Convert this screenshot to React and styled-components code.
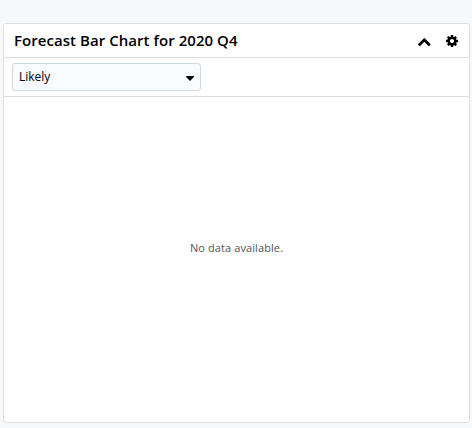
import React from "react";
import styled, { createGlobalStyle } from "styled-components";

const GlobalStyle = createGlobalStyle`
  * { box-sizing: border-box; }
  body { margin: 0; background: #f7f8fa; font-family: "Open Sans", sans-serif; color: #000; }
`;
const Page = styled.main`
  height: 428px;
  padding: 23px 2px 5px 3px;
  overflow: hidden;
`;
const Card = styled.section`
  height: 400px;
  display: flex;
  flex-direction: column;
  background: #fff;
  border: 1px solid #dcdee0;
  border-radius: 3px;
`;
const Header = styled.header`
  height: 34px;
  flex: none;
  display: flex;
  align-items: center;
  padding: 0 10px;
  border-bottom: 1px solid #dcdee0;
`;
const Title = styled.h1`
  flex: 1;
  margin: 0;
  padding-bottom: 1px;
  font-size: 15px;
  line-height: 20px;
  font-weight: 600;
  letter-spacing: 0.05px;
`;
const Actions = styled.div`
  display: flex;
  align-items: center;
  gap: 14px;
`;
const Icon = styled.svg`
  display: block;
  width: 14px;
  height: 14px;
  fill: currentColor;
`;
const Toolbar = styled.div`
  height: 39px;
  flex: none;
  padding: 5px 8px;
  border-bottom: 1px solid #dcdee0;
`;
const Select = styled.button`
  width: 189px;
  height: 28px;
  display: flex;
  align-items: center;
  justify-content: space-between;
  padding: 0 6px;
  border: 1px solid #cfd9e2;
  border-radius: 3px;
  background: #f9fbff;
  color: #000;
  font: 12px/18px "Open Sans", sans-serif;
`;
const Caret = styled.svg`
  display: block;
  width: 8px;
  height: 5px;
  margin-top: 2px;
`;
const Empty = styled.div`
  flex: 1;
  display: flex;
  justify-content: center;
  padding-top: 143px;
  font-size: 11px;
  line-height: 16px;
  letter-spacing: 0.1px;
  color: #555;
`;

export default function App() {
  return (
    <Page>
      <GlobalStyle />
      <Card>
        <Header>
          <Title>Forecast Bar Chart for 2020 Q4</Title>
          <Actions>
            <Icon viewBox="-40 -40 1792 1792">
              <path d="M1683 1331l-166 165q-19 19-45 19t-45-19l-531-531-531 531q-19 19-45 19t-45-19l-166-165q-19-19-19-45.500t19-45.500l742-741q19-19 45-19t45 19l742 741q19 19 19 45.500t-19 45.500z" />
            </Icon>
            <Icon viewBox="0 0 1792 1792">
              <path d="M1152 896q0-106-75-181t-181-75-181 75-75 181 75 181 181 75 181-75 75-181zm512-109v222q0 12-8 23t-20 13l-185 28q-19 54-39 91 35 50 107 138 10 12 10 25t-9 23q-27 37-99 108t-94 71q-12 0-26-9l-138-108q-44 23-91 38-16 136-29 186-7 28-36 28h-222q-14 0-24.500-8.500t-11.500-21.500l-28-184q-49-16-90-37l-141 107q-10 9-25 9-14 0-25-11-126-114-165-168-7-10-7-23 0-12 8-23 15-21 51-66.500t54-70.500q-27-50-41-99l-183-27q-13-2-21-12.500t-8-23.500v-222q0-12 8-23t19-13l186-28q14-46 39-92-40-57-107-138-10-12-10-24 0-10 9-23 26-36 98.500-107.500t94.500-71.500q13 0 26 10l138 107q44-23 91-38 16-136 29-186 7-28 36-28h222q14 0 24.500 8.500t11.500 21.500l28 184q49 16 90 37l142-107q9-9 24-9 13 0 25 10 129 119 165 170 7 8 7 22 0 12-8 23-15 21-51 66.500t-54 70.500q26 50 41 98l183 28q13 2 21 12.500t8 23.500z" />
            </Icon>
          </Actions>
        </Header>
        <Toolbar>
          <Select>
            Likely
            <Caret viewBox="0 0 8 5"><path d="M.5 0h7q.8.300.3 1L4.500 4.600q-.5.500-1 0L.2 1Q-.3.300.5 0z" /></Caret>
          </Select>
        </Toolbar>
        <Empty>No data available.</Empty>
      </Card>
    </Page>
  );
}
